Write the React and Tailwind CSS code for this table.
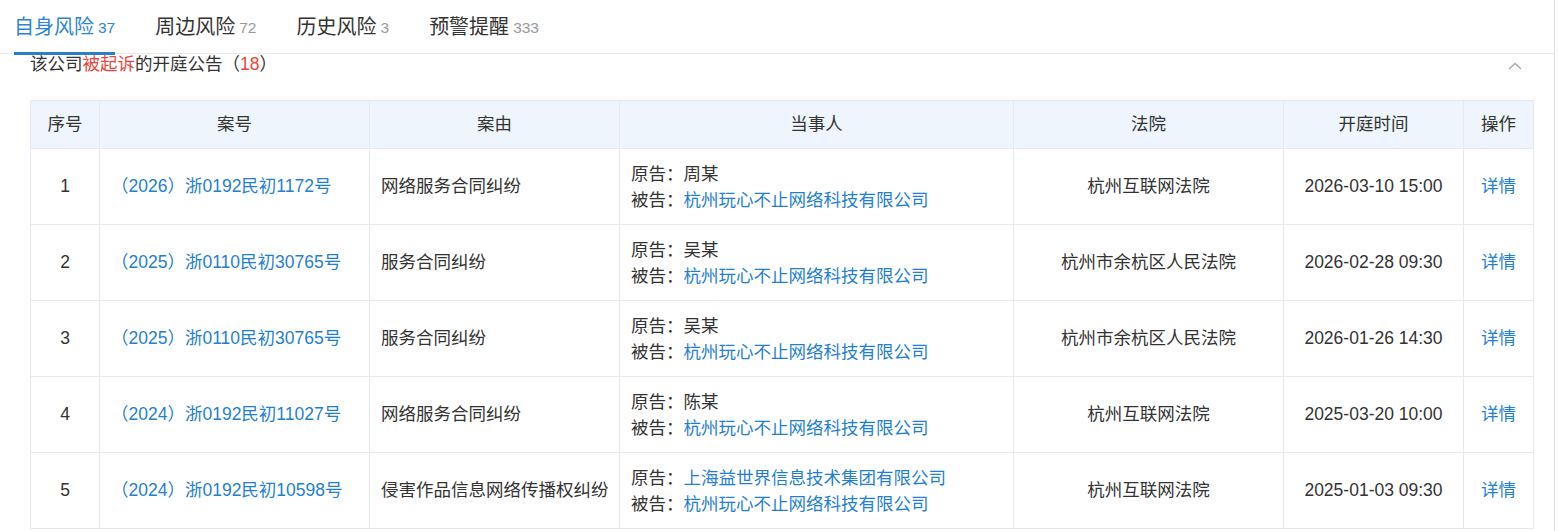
const tabs = [
  { name: "自身风险", count: "37", active: true },
  { name: "周边风险", count: "72" },
  { name: "历史风险", count: "3" },
  { name: "预警提醒", count: "333" },
];

const rows = [
  {
    no: 1,
    caseNo: "（2026）浙0192民初1172号",
    reason: "网络服务合同纠纷",
    plaintiff: "周某",
    defendant: "杭州玩心不止网络科技有限公司",
    court: "杭州互联网法院",
    time: "2026-03-10 15:00",
  },
  {
    no: 2,
    caseNo: "（2025）浙0110民初30765号",
    reason: "服务合同纠纷",
    plaintiff: "吴某",
    defendant: "杭州玩心不止网络科技有限公司",
    court: "杭州市余杭区人民法院",
    time: "2026-02-28 09:30",
  },
  {
    no: 3,
    caseNo: "（2025）浙0110民初30765号",
    reason: "服务合同纠纷",
    plaintiff: "吴某",
    defendant: "杭州玩心不止网络科技有限公司",
    court: "杭州市余杭区人民法院",
    time: "2026-01-26 14:30",
  },
  {
    no: 4,
    caseNo: "（2024）浙0192民初11027号",
    reason: "网络服务合同纠纷",
    plaintiff: "陈某",
    defendant: "杭州玩心不止网络科技有限公司",
    court: "杭州互联网法院",
    time: "2025-03-20 10:00",
  },
  {
    no: 5,
    caseNo: "（2024）浙0192民初10598号",
    reason: "侵害作品信息网络传播权纠纷",
    plaintiff: "上海益世界信息技术集团有限公司",
    plaintiffLink: true,
    defendant: "杭州玩心不止网络科技有限公司",
    court: "杭州互联网法院",
    time: "2025-01-03 09:30",
  },
];

const th = "border border-[#e4eaf0] bg-[#eef5fc] font-normal text-center";
const td = "border border-[#e4eaf0] h-[76px]";

export default function App() {
  return (
    <div
      className="w-[1555px] min-h-[531px] border-r border-[#e3e3e3] bg-white text-[#333]"
      style={{ fontFamily: '"Liberation Sans", "Noto Sans CJK SC", sans-serif' }}
    >
      <div className="flex h-[54px] items-center gap-[40px] border-b border-[#eaeaea] pl-[14px]">
        {tabs.map((t) => (
          <div key={t.name} className="relative flex h-full items-center">
            <span className={`text-[20px] ${t.active ? "text-[#2a86d6]" : "text-[#333]"}`}>{t.name}</span>
            <span className={`ml-[4px] mt-[2px] text-[15.5px] ${t.active ? "text-[#2a86d6]" : "text-[#9a9a9a]"}`}>{t.count}</span>
            {t.active && <div className="absolute -bottom-[2px] left-0 right-0 h-[3px] bg-[#2a7fc6]" />}
          </div>
        ))}
      </div>

      <div className="pl-[30px] pr-[21px]">
        <div className="flex h-[20px] items-center justify-between">
          <div className="text-[17.5px] leading-[20px]">
            该公司<span className="text-[#e8463c]">被起诉</span>的开庭公告（<span className="text-[#e8463c]">18</span>）
          </div>
          <svg width="14" height="8" viewBox="0 0 14 8" className="mr-[11px] mt-[4px]">
            <polyline points="1,7 7,1.5 13,7" fill="none" stroke="#a8a8a8" strokeWidth="1.4" />
          </svg>
        </div>

        <table className="mt-[26px] w-[1503px] table-fixed border-collapse text-[17.5px]">
          <colgroup>
            <col className="w-[69px]" />
            <col className="w-[270px]" />
            <col className="w-[250px]" />
            <col className="w-[394px]" />
            <col className="w-[270px]" />
            <col className="w-[180px]" />
            <col className="w-[70px]" />
          </colgroup>
          <thead>
            <tr className="h-[48px]">
              <th className={th}>序号</th>
              <th className={th}>案号</th>
              <th className={th}>案由</th>
              <th className={th}>当事人</th>
              <th className={th}>法院</th>
              <th className={th}>开庭时间</th>
              <th className={th}>操作</th>
            </tr>
          </thead>
          <tbody>
            {rows.map((r) => (
              <tr key={r.no}>
                <td className={`${td} text-center`}>{r.no}</td>
                <td className={`${td} px-[11px] text-[#1f7fd4]`}>{r.caseNo}</td>
                <td className={`${td} whitespace-nowrap pl-[11px]`}>{r.reason}</td>
                <td className={`${td} px-[11px] leading-[26px]`}>
                  <div>
                    原告：<span className={r.plaintiffLink ? "text-[#1f7fd4]" : ""}>{r.plaintiff}</span>
                  </div>
                  <div>
                    被告：<span className="text-[#1f7fd4]">{r.defendant}</span>
                  </div>
                </td>
                <td className={`${td} text-center`}>{r.court}</td>
                <td className={`${td} text-center`}>{r.time}</td>
                <td className={`${td} text-center text-[#1f7fd4]`}>详情</td>
              </tr>
            ))}
          </tbody>
        </table>
      </div>
    </div>
  );
}
